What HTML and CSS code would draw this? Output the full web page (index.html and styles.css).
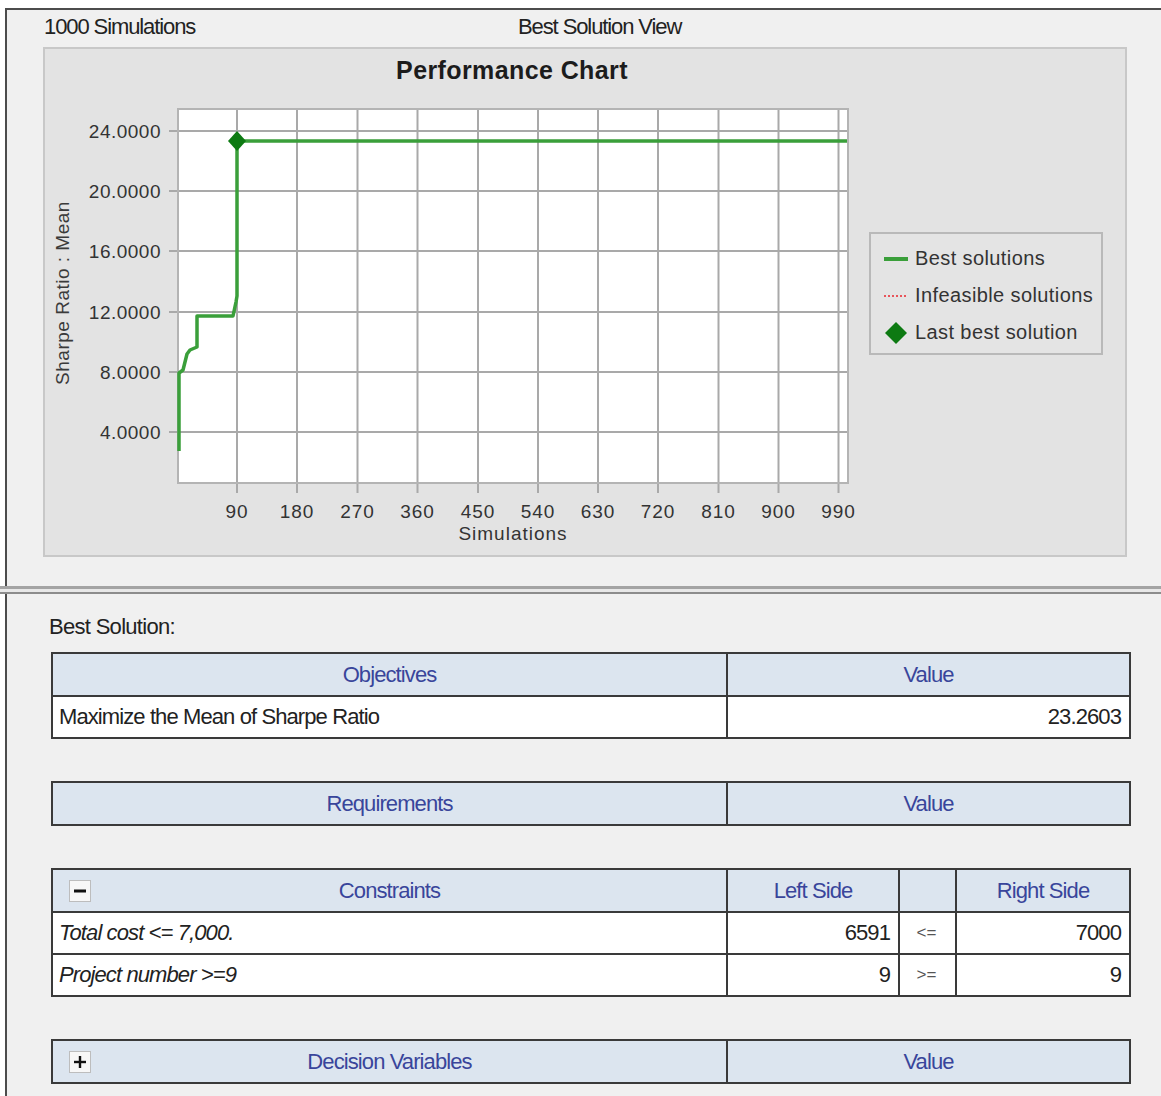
FILE: index.html
```html
<!DOCTYPE html>
<html lang="en">
<head>
<meta charset="utf-8">
<title>Best Solution View</title>
<link rel="stylesheet" href="styles.css">
</head>
<body>
<div class="window">
  <div class="tabs">
    <span class="tab-sim">1000 Simulations</span>
    <span class="tab-view">Best Solution View</span>
  </div>

  <div class="chart-panel">
    <svg class="chart" width="820" height="506" viewBox="45 49 820 506">
      <text class="chart-title" x="512" y="79" text-anchor="middle">Performance Chart</text>
      <text class="axis-title" transform="translate(69 293) rotate(-90)" text-anchor="middle">Sharpe Ratio : Mean</text>

      <!-- plot area -->
      <rect class="plot" x="178" y="109" width="670" height="374"/>

      <!-- vertical grid + x ticks -->
      <g class="grid-lines">
        <line x1="237" y1="109" x2="237" y2="493"/>
        <line x1="297" y1="109" x2="297" y2="493"/>
        <line x1="357.5" y1="109" x2="357.5" y2="493"/>
        <line x1="417.5" y1="109" x2="417.5" y2="493"/>
        <line x1="478" y1="109" x2="478" y2="493"/>
        <line x1="538" y1="109" x2="538" y2="493"/>
        <line x1="598" y1="109" x2="598" y2="493"/>
        <line x1="658" y1="109" x2="658" y2="493"/>
        <line x1="718.5" y1="109" x2="718.5" y2="493"/>
        <line x1="778.5" y1="109" x2="778.5" y2="493"/>
        <line x1="838.5" y1="109" x2="838.5" y2="493"/>
      </g>
      <!-- horizontal grid + y ticks -->
      <g class="grid-lines">
        <line x1="169" y1="131" x2="848" y2="131"/>
        <line x1="169" y1="191" x2="848" y2="191"/>
        <line x1="169" y1="251" x2="848" y2="251"/>
        <line x1="169" y1="312" x2="848" y2="312"/>
        <line x1="169" y1="372" x2="848" y2="372"/>
        <line x1="169" y1="432" x2="848" y2="432"/>
      </g>
      <rect class="plot-frame" x="178" y="109" width="670" height="374"/>

      <g class="y-labels" text-anchor="end">
        <text x="161" y="138">24.0000</text>
        <text x="161" y="198">20.0000</text>
        <text x="161" y="258">16.0000</text>
        <text x="161" y="319">12.0000</text>
        <text x="161" y="379">8.0000</text>
        <text x="161" y="439">4.0000</text>
      </g>

      <g class="x-labels" text-anchor="middle">
        <text x="237" y="518">90</text>
        <text x="297" y="518">180</text>
        <text x="357.5" y="518">270</text>
        <text x="417.5" y="518">360</text>
        <text x="478" y="518">450</text>
        <text x="538" y="518">540</text>
        <text x="598" y="518">630</text>
        <text x="658" y="518">720</text>
        <text x="718.5" y="518">810</text>
        <text x="778.5" y="518">900</text>
        <text x="838.5" y="518">990</text>
      </g>
      <text class="x-title" x="513" y="540" text-anchor="middle">Simulations</text>

      <!-- best solution trace -->
      <polyline class="trace" points="179,451 179,373 183,370 187,354 190,350 197,347 197,316 233,316 236,302 237,296 237,141 847,141"/>
      <polygon class="marker" points="237,131 246,141 237,151 228,141"/>
    </svg>

    <div class="legend">
      <div class="legend-item">
        <svg class="swatch" width="24" height="24" viewBox="0 0 24 24"><rect x="0" y="10" width="24" height="4" fill="#3a9f3a"/></svg>
        <span>Best solutions</span>
      </div>
      <div class="legend-item">
        <svg class="swatch" width="24" height="24" viewBox="0 0 24 24"><line x1="0" y1="12" x2="24" y2="12" stroke="#e8545a" stroke-width="2" stroke-dasharray="2 2"/></svg>
        <span>Infeasible solutions</span>
      </div>
      <div class="legend-item">
        <svg class="swatch" width="24" height="24" viewBox="0 0 24 24"><polygon points="12,1 23,12 12,23 1,12" fill="#0d7a12"/></svg>
        <span>Last best solution</span>
      </div>
    </div>
  </div>

  <div class="splitter"></div>

  <div class="results">
    <div class="caption">Best Solution:</div>

    <table class="grid">
      <colgroup><col class="c-name"><col class="c-value"></colgroup>
      <tr class="head"><th>Objectives</th><th>Value</th></tr>
      <tr><td>Maximize the Mean of Sharpe Ratio</td><td class="num">23.2603</td></tr>
    </table>

    <table class="grid">
      <colgroup><col class="c-name"><col class="c-value"></colgroup>
      <tr class="head"><th>Requirements</th><th>Value</th></tr>
    </table>

    <table class="grid">
      <colgroup><col class="c-name"><col class="c-left"><col class="c-op"><col class="c-right"></colgroup>
      <tr class="head">
        <th>
          <div class="th-inner">
            <span class="toggle"><svg width="14" height="14" viewBox="0 0 14 14"><rect x="1" y="5.5" width="12" height="3" fill="#111"/></svg></span>
            <span>Constraints</span>
          </div>
        </th>
        <th>Left Side</th><th></th><th>Right Side</th>
      </tr>
      <tr><td class="it">Total cost &lt;= 7,000.</td><td class="num">6591</td><td class="op">&lt;=</td><td class="num">7000</td></tr>
      <tr><td class="it">Project number &gt;=9</td><td class="num">9</td><td class="op">&gt;=</td><td class="num">9</td></tr>
    </table>

    <table class="grid">
      <colgroup><col class="c-name"><col class="c-value"></colgroup>
      <tr class="head">
        <th>
          <div class="th-inner">
            <span class="toggle"><svg width="14" height="14" viewBox="0 0 14 14"><rect x="1" y="5.8" width="12" height="2.4" fill="#111"/><rect x="5.8" y="1" width="2.4" height="12" fill="#111"/></svg></span>
            <span>Decision Variables</span>
          </div>
        </th>
        <th>Value</th>
      </tr>
    </table>
  </div>
</div>
</body>
</html>
```

FILE: styles.css
```css
html, body {
  margin: 0;
  background: #ffffff;
}

body {
  font-family: "Liberation Sans", Arial, sans-serif;
  color: #1e1e1e;
}

.window {
  margin: 8px 0 0 5px;
  min-height: 1088px;
  box-sizing: border-box;
  border-top: 2px solid #4c4c4c;
  border-left: 2px solid #4c4c4c;
  background: #f0f0f0;
}

/* header captions */
.tabs {
  display: flex;
  height: 37px;
  padding-left: 37px;
  font-size: 22px;
  letter-spacing: -1.1px;
  line-height: 34px;
  color: #222;
}

.tab-sim {
  width: 474px;
}

/* chart panel */
.chart-panel {
  display: flex;
  align-items: flex-start;
  width: 1084px;
  height: 510px;
  box-sizing: border-box;
  margin: 0 0 29px 36px;
  border: 2px solid #c8c8c8;
  background: #e3e3e3;
}

.chart {
  display: block;
  flex: none;
}

.chart-title {
  font-size: 25px;
  font-weight: bold;
  letter-spacing: 0.4px;
  fill: #1c1c1c;
}

.axis-title {
  font-size: 19px;
  letter-spacing: 0.5px;
  fill: #3a3a3a;
}

.plot {
  fill: #ffffff;
}

.plot-frame {
  fill: none;
  stroke: #b4b4b4;
  stroke-width: 2;
}

.grid-lines line {
  stroke: #a9a9a9;
  stroke-width: 2;
}

.y-labels text {
  font-size: 19px;
  letter-spacing: 0.5px;
  fill: #333;
}

.x-labels text,
.x-title {
  font-size: 19px;
  letter-spacing: 1px;
  fill: #333;
}

.trace {
  fill: none;
  stroke: #3a9f3a;
  stroke-width: 3.5;
  stroke-linejoin: round;
}

.marker {
  fill: #0d7a12;
}

/* legend */
.legend {
  flex: none;
  width: 234px;
  height: 123px;
  box-sizing: border-box;
  margin: 183px 0 0 4px;
  padding: 6px 0 0 13px;
  border: 2px solid #b9b9b9;
  background: #e4e4e4;
  font-size: 20px;
  letter-spacing: 0.4px;
  color: #333;
}

.legend-item {
  display: flex;
  align-items: center;
  height: 37px;
}

.swatch {
  flex: none;
  margin-right: 7px;
}

/* splitter between chart and results */
.splitter {
  height: 3px;
  border-top: 3px solid #a4a4a4;
  border-bottom: 2px solid #8c8c8c;
  background: #e8e8e8;
  margin-left: -7px;
}

.results {
  padding: 16px 0 0 0;
}

.caption {
  padding-left: 42px;
  font-size: 22px;
  letter-spacing: -0.7px;
  line-height: 33px;
  height: 33px;
  margin-bottom: 9px;
  color: #222;
}

/* result grids */
.grid {
  width: 1078px;
  margin: 0 0 42px 44px;
  border-collapse: collapse;
  table-layout: fixed;
  font-size: 22px;
  letter-spacing: -0.9px;
}

.c-name { width: 675px; }
.c-value { width: 403px; }
.c-left { width: 172px; }
.c-op { width: 57px; }
.c-right { width: 174px; }

.grid th,
.grid td {
  border: 2px solid #3a3a3a;
  padding: 0 8px;
  white-space: nowrap;
}

.grid tr.head {
  height: 43px;
}

.grid tr {
  height: 42px;
}

.grid th {
  background: #dce5ef;
  color: #39459b;
  font-weight: normal;
  text-align: center;
}

.grid td {
  background: #ffffff;
  color: #222;
  padding-left: 6px;
}

.grid td.num {
  text-align: right;
}

.grid td.op {
  text-align: center;
  font-size: 17px;
  letter-spacing: 0;
  color: #555;
}

.grid td.it {
  font-style: italic;
}

.th-inner {
  display: grid;
  grid-template-columns: 1fr auto 1fr;
  align-items: center;
  margin-left: 8px;
  margin-right: 8px;
}

.th-inner > span:last-child {
  grid-column: 2;
  grid-row: 1;
}

.toggle {
  grid-column: 1;
  grid-row: 1;
  justify-self: start;
  display: flex;
  align-items: center;
  justify-content: center;
  width: 22px;
  height: 22px;
  box-sizing: border-box;
  border: 1px solid #bdbdbd;
  background: #f7f7f7;
}
```
